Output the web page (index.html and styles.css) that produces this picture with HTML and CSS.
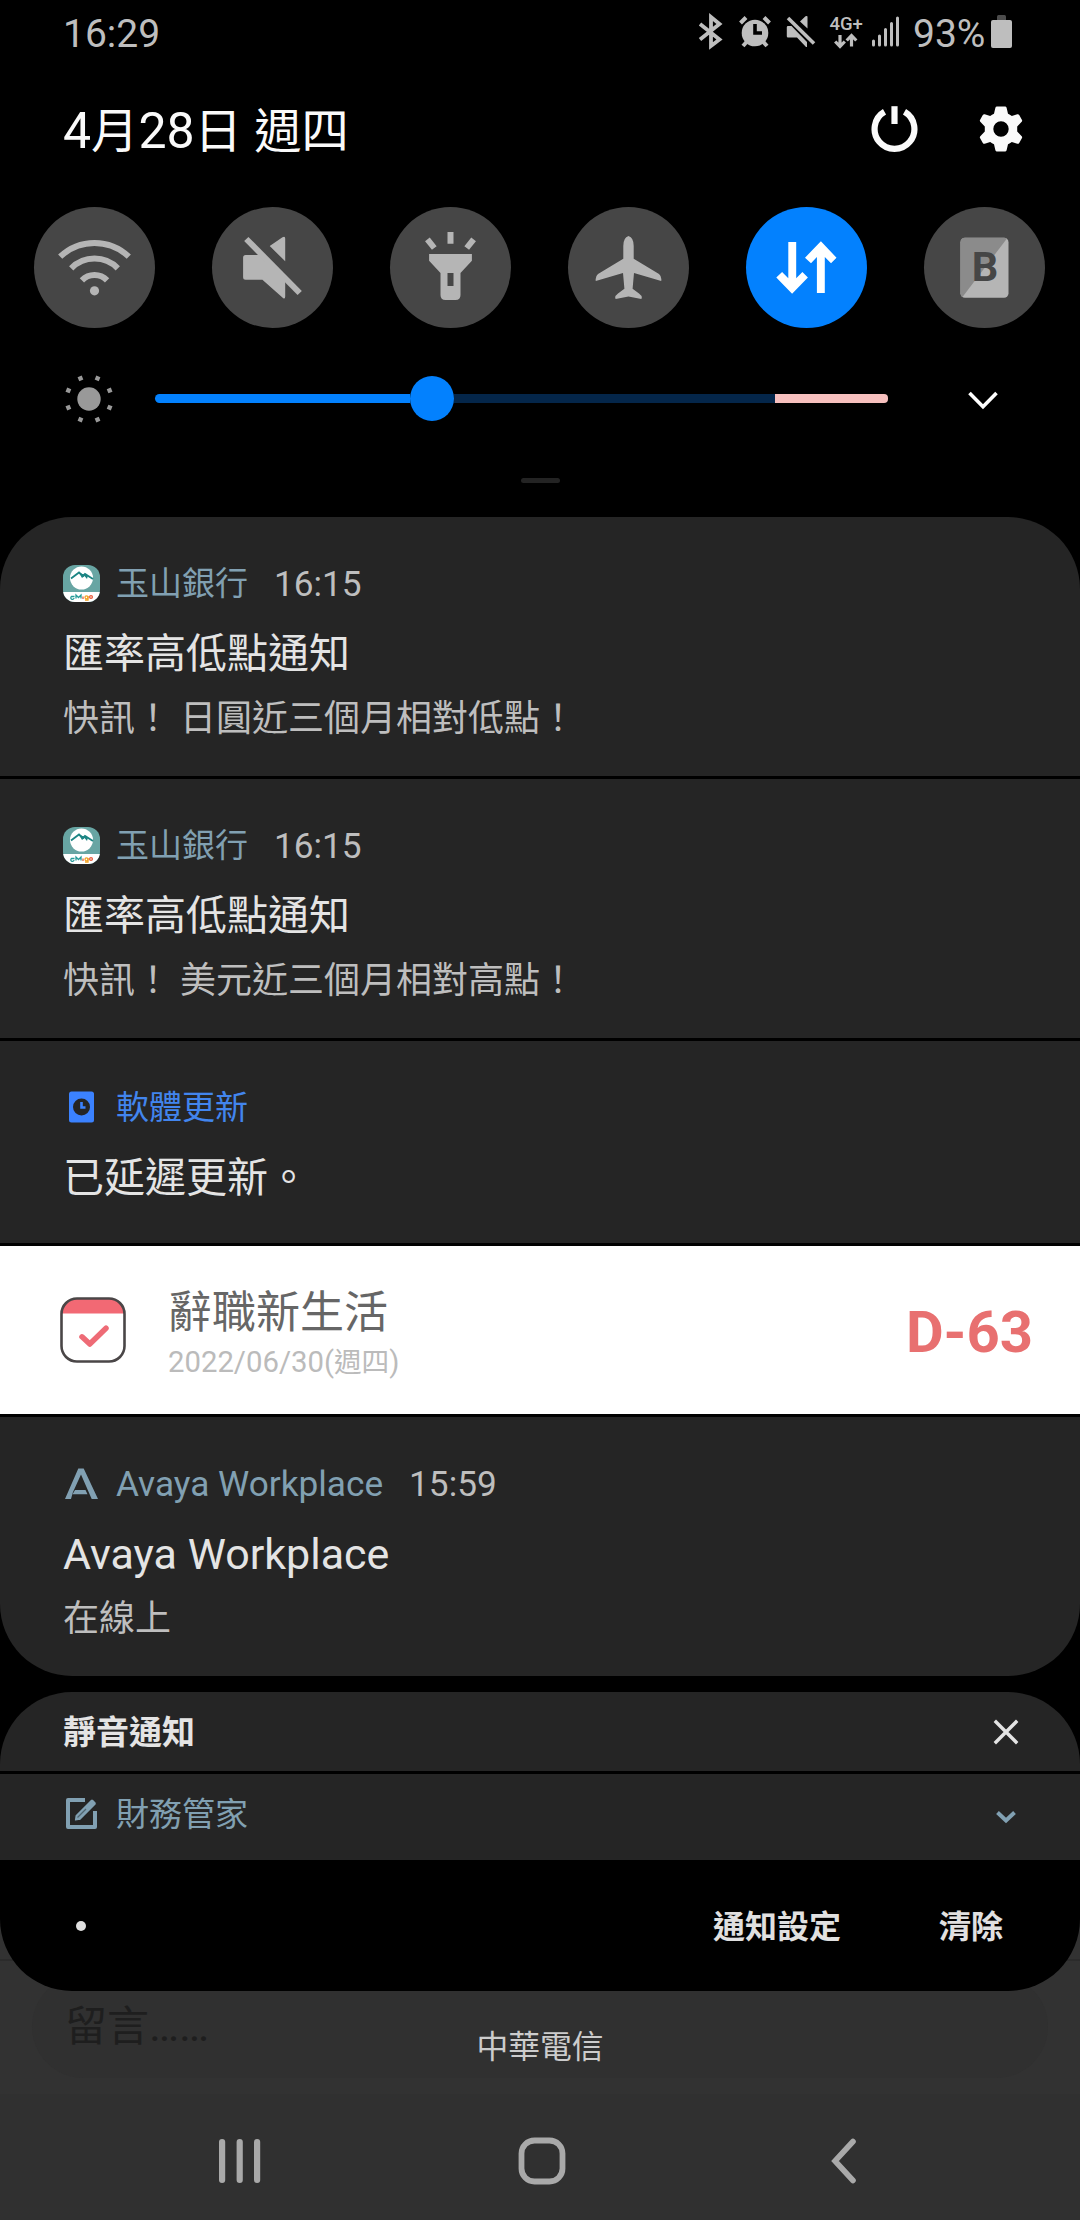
FILE: index.html
```html
<!DOCTYPE html>
<html lang="zh-Hant">
<head>
<meta charset="utf-8">
<title>通知</title>
<link rel="stylesheet" href="styles.css">
</head>
<body>
<div class="screen">
  <div class="app">
    <div class="composer"><div class="composer-field">留言<span class="dots">……</span></div></div>
    <div class="app-nav"></div>
  </div>

  <main class="shade">
    <header class="statusbar">
      <span class="clock">16:29</span>
      <svg class="status-icons" width="232" height="40" viewBox="680 10 232 40" fill="#bebebe">
        <path d="M700 24 719.500 39.500 711 46V17L719.500 24 700 39.500" fill="none" stroke="#bebebe" stroke-width="3.800"/>
        <g>
          <circle cx="755" cy="33" r="13.300"/>
          <path d="M740.500 23 746 17.500M769.500 23 764 17.500" stroke="#bebebe" stroke-width="4"/>
          <path d="M747 41.500 743 46M763 41.500 767 46" stroke="#bebebe" stroke-width="4"/>
          <path d="M755 24V33H762" fill="none" stroke="#000" stroke-width="3.600"/>
        </g>
        <path d="M788 26h3.500L807 42v5h-1l-9-9.500h-9q-1.200 0-1.200-1.200V27.200q0-1.200 1.200-1.200zM800 21.500 805.500 16.300q2-1 2 .5V28.500z"/>
        <path d="M788 18 814 43.500" stroke="#bebebe" stroke-width="3.600"/>
        <text class="net-label" x="829.500" y="29.800">4G+</text>
        <path d="M840 35V45.500M835.200 41.500 840 46.500 844.800 41.500M851.500 46.500V36M846.700 40.500 851.500 35.500 856.300 40.500" fill="none" stroke="#bebebe" stroke-width="3.200"/>
        <path d="M873.500 41V45M879.500 36V45M885.500 29.500V45M891.500 23.500V45M897.500 18V45" stroke="#bebebe" stroke-width="3" stroke-linecap="round"/>
      </svg>
      <span class="battery-level">93%</span>
      <svg class="battery" width="21" height="33" viewBox="0 0 21 33"><path d="M6 5V1.500Q6 0 7.500 0h6Q15 0 15 1.500V5z" fill="#4c4c4c"/><rect y="5" width="21" height="28" rx="2" fill="#bebebe"/></svg>
    </header>

    <div class="daterow">
      <span class="date">4<span class="han">月</span>28<span class="han">日</span> <span class="han">週四</span></span>
      <svg width="48" height="50" viewBox="870 103 48 50" fill="none" stroke="#fafafa" stroke-width="6.200"><path d="M884.500 110.800A19.900 19.900 0 1 0 904.500 110.800"/><path d="M894.500 105.200V123"/></svg>
      <svg class="gear" width="48" height="50" viewBox="-24 -25 48 50" fill="#fafafa"><path fill-rule="evenodd" d="M-4-22.500H4Q5.300-22.500 5.600-21.200L7-15.200Q9-14.200 10.800-13L16.300-14.800Q17.500-15.100 18.200-14L21-9Q21.500-8 20.700-7.200L16.200-2.500V2.500L20.700 7.200Q21.500 8 21 9L18.200 14Q17.500 15.100 16.300 14.800L10.800 13Q9 14.200 7 15.200L5.600 21.200Q5.300 22.500 4 22.500H-4Q-5.300 22.500-5.600 21.200L-7 15.200Q-9 14.200-10.800 13L-16.300 14.800Q-17.500 15.100-18.200 14L-21 9Q-21.500 8-20.700 7.200L-16.200 2.500V-2.500L-20.700-7.200Q-21.500-8-21-9L-18.200-14Q-17.500-15.100-16.300-14.800L-10.800-13Q-9-14.200-7-15.200L-5.600-21.200Q-5.300-22.500-4-22.500zM0-7.700A7.700 7.700 0 1 0 0 7.700 7.700 7.700 0 1 0 0-7.700z"/></svg>
    </div>

    <nav class="toggles">
      <svg class="toggle" viewBox="0 0 121 121"><g fill="none" stroke="#b5b5b5" stroke-width="6"><path d="M26.200 49.700A49.600 49.600 0 0 1 94.800 49.700"/><path d="M37.200 61.300A32.600 32.600 0 0 1 83.800 61.300"/><path d="M47.900 73.300A17.500 17.500 0 0 1 73.100 73.300"/></g><circle cx="60.500" cy="83.800" r="4.600" fill="#b5b5b5"/></svg>
      <svg class="toggle" viewBox="0 0 121 121" fill="#b5b5b5"><path d="M33.600 48H46L50 48 73.200 72V89.500Q73.200 92.500 71 91L50.400 72.700H33.600Q31.100 72.700 31.100 70.200V50.500Q31.100 48 33.600 48zM57.700 39 70.500 30.300Q73.200 29 73.200 31.500V54.300z"/><path d="M34.300 32 87.700 86" stroke="#b5b5b5" stroke-width="6"/></svg>
      <svg class="toggle" viewBox="0 0 121 121" fill="#b5b5b5"><path d="M60.500 25V36.700M37.400 32.300 44.300 41M83.600 32.300 76.700 41" stroke="#b5b5b5" stroke-width="6"/><path fill-rule="evenodd" d="M39.100 47H81.900V53.700L70.500 66V88Q70.500 93 65.500 93H55.500Q50.500 93 50.500 88V66L39.100 53.700zM57.500 66V79H63.500V66z"/></svg>
      <svg class="toggle" viewBox="0 0 121 121" fill="#b5b5b5"><path d="M60.500 29Q65.700 30.500 65.700 39V51.700L91 67Q94 69.500 93.200 74L66 66 64.600 81.700 71 86.500Q75 89.500 73.300 92L60.500 89.500 47.700 92Q46 89.500 50 86.500L56.400 81.700 55 66 27.800 74Q27 69.500 30 67L55.300 51.700V39Q55.300 30.500 60.500 29z"/></svg>
      <svg class="toggle on" viewBox="0 0 121 121" fill="#fff"><path d="M42.300 35H50.200V71.300L56.400 65 61.900 70.500 46.100 86.700 30.300 70.500 36.100 65 42.300 71.300zM70.900 86H78.800V50L85 56.300 90.500 50.700 74.900 34.300 59 50.700 65 56.300 70.900 50z"/></svg>
      <svg class="toggle" viewBox="0 0 121 121"><rect x="36.500" y="30.700" width="48" height="60" rx="4.500" fill="#b5b5b5"/><path d="M82.800 31.700 38.500 90Q36.500 89 36.500 86.200V35.200Q36.500 30.700 41 30.700H80Q81.800 30.700 82.800 31.700z" fill="#8b8b8b"/><text class="toggle-letter" x="60.900" y="74">B</text></svg>
    </nav>

    <div class="brightness">
      <svg class="sun" width="50" height="50" viewBox="-25 -25 50 50" fill="#999"><circle r="11.700"/><g id="rays"><path d="M-2.200-24.500h4.400v4.400h-4.400z" transform="rotate(22.500)"/><path d="M-2.200-24.500h4.400v4.400h-4.400z" transform="rotate(67.500)"/><path d="M-2.200-24.500h4.400v4.400h-4.400z" transform="rotate(112.500)"/><path d="M-2.200-24.500h4.400v4.400h-4.400z" transform="rotate(157.500)"/></g><use href="#rays" transform="rotate(180)"/></svg>
      <div class="slider"><span class="filled"></span><span class="thumb"></span><span class="rest"></span><span class="hot"></span></div>
      <svg class="more" width="34" height="24" viewBox="0 0 34 24" fill="none" stroke="#fff" stroke-width="3.600"><path d="M3.500 4 17 17.700 30.500 4"/></svg>
    </div>
    <div class="handle"></div>

    <section class="list">
      <article class="note">
        <div class="note-head">
          <svg class="note-icon" viewBox="0 0 37 37"><defs><clipPath id="bank"><rect width="37" height="37" rx="12"/></clipPath></defs><g clip-path="url(#bank)"><path fill="#68a5a3" d="M0 0h37v37H0z"/><circle cx="18.500" cy="13" r="11.500" fill="#fff"/><path d="M0 27h37v10H0z" fill="#fff"/><path d="M8 13.500 16 7.500 20 11 22 9 30 14" fill="none" stroke="#1d8584" stroke-width="1.800"/><path d="M16 8 19 13 21.500 11 24 14 25 10.500z" fill="#1d8584"/></g><g fill="none" stroke-width="1.300"><path d="M11.500 31.500H8.500A1.600 1.600 0 1 0 11 33M13 33.500V30L15.500 32.500 18 30V33.500" stroke="#249b98"/><path d="M20 31.500V34" stroke="#e95b3b"/><circle cx="23.500" cy="32.300" r="1.500" stroke="#f3a322"/><path d="M25 31V35H22" stroke="#f3a322"/><circle cx="28" cy="32" r="1.400" stroke="#e95b3b"/></g></svg>
          <span class="source">玉山銀行</span><time>16:15</time>
        </div>
        <h2>匯率高低點通知</h2>
        <p>快訊！ 日圓近三個月相對低點！</p>
      </article>
      <article class="note">
        <div class="note-head">
          <svg class="note-icon" viewBox="0 0 37 37"><g clip-path="url(#bank)"><path fill="#68a5a3" d="M0 0h37v37H0z"/><circle cx="18.500" cy="13" r="11.500" fill="#fff"/><path d="M0 27h37v10H0z" fill="#fff"/><path d="M8 13.500 16 7.500 20 11 22 9 30 14" fill="none" stroke="#1d8584" stroke-width="1.800"/><path d="M16 8 19 13 21.500 11 24 14 25 10.500z" fill="#1d8584"/></g><g fill="none" stroke-width="1.300"><path d="M11.500 31.500H8.500A1.600 1.600 0 1 0 11 33M13 33.500V30L15.500 32.500 18 30V33.500" stroke="#249b98"/><path d="M20 31.500V34" stroke="#e95b3b"/><circle cx="23.500" cy="32.300" r="1.500" stroke="#f3a322"/><path d="M25 31V35H22" stroke="#f3a322"/><circle cx="28" cy="32" r="1.400" stroke="#e95b3b"/></g></svg>
          <span class="source">玉山銀行</span><time>16:15</time>
        </div>
        <h2>匯率高低點通知</h2>
        <p>快訊！ 美元近三個月相對高點！</p>
      </article>
      <article class="note note-short">
        <div class="note-head">
          <svg class="note-icon" viewBox="0 0 37 37"><rect x="6" y="2.500" width="25" height="31" rx="2.500" fill="#3b82ff"/><circle cx="18.500" cy="18" r="8.500" fill="#252525"/><path d="M18.500 13V18.500H22.500" fill="none" stroke="#3b82ff" stroke-width="2.600"/></svg>
          <span class="source system">軟體更新</span>
        </div>
        <h2>已延遲更新。</h2>
      </article>
      <article class="countdown">
        <svg width="66" height="66" viewBox="0 0 66 66"><path d="M1.500 16.500V17Q1.500 1.500 17 1.500H49Q64.500 1.500 64.500 17V16.500z" fill="#f26974"/><rect x="1.500" y="1.500" width="63" height="63" rx="15.500" fill="none" stroke="#4a4647" stroke-width="2.600"/><path d="M22 39.800 29.800 47 46 31.200" fill="none" stroke="#ee6b76" stroke-width="5.500" stroke-linecap="round" stroke-linejoin="round"/></svg>
        <div class="countdown-text"><h3>辭職新生活</h3><div class="due">2022/06/30(<span class="han">週四</span>)</div></div>
        <strong>D-63</strong>
      </article>
      <article class="note">
        <div class="note-head">
          <svg class="note-icon" viewBox="0 0 37 37" fill="#81a0b2"><path d="M2 34 15.300 3.500H20.700L35 34H28.700L18 9.500 9.800 27.500 8 34zM12 25H22.500L24.500 29.300H9.500z"/></svg>
          <span class="source latin">Avaya Workplace</span><time>15:59</time>
        </div>
        <h2 class="latin">Avaya Workplace</h2>
        <p>在線上</p>
      </article>
    </section>

    <section class="silent">
      <div class="silent-head"><b>靜音通知</b><svg width="28" height="28" viewBox="0 0 28 28" stroke="#e4e4e4" stroke-width="3.400"><path d="M2.800 2.800 25.200 25.200M25.200 2.800 2.800 25.200"/></svg></div>
      <div class="silent-item">
        <svg class="note-icon" viewBox="0 0 37 37"><path d="M22 5H5V32H32V16" fill="none" stroke="#81a0b2" stroke-width="4" stroke-linejoin="round"/><path d="M12 20 27.500 4.500Q29 3 30.500 4.500L33 7Q34 8.500 33 10L17.500 25.500 11 26.500z" fill="#81a0b2" stroke="#252525" stroke-width="1.300"/><path d="M14.500 22.500 23 14" stroke="#4f646f" stroke-width="1.200"/></svg>
        <span class="source">財務管家</span>
        <svg class="expand" width="22" height="14" viewBox="0 0 22 14" fill="none" stroke="#81a0b2" stroke-width="4"><path d="M2.500 2.500 11 10.500 19.500 2.500"/></svg>
      </div>
    </section>

    <footer class="actions"><i class="dot"></i><span class="settings">通知設定</span><span class="clear">清除</span></footer>
  </main>

  <div class="carrier">中華電信</div>
  <nav class="navbar">
    <svg width="42" height="44" viewBox="0 0 42 44" fill="#a9a9a9"><rect width="6.200" height="44" rx="3"/><rect x="17.600" width="6.200" height="44" rx="3"/><rect x="35" width="6.200" height="44" rx="3"/></svg>
    <svg class="home" width="48" height="48" viewBox="0 0 48 48"><rect x="3.500" y="3.500" width="41" height="41" rx="13" fill="none" stroke="#a9a9a9" stroke-width="5.800"/></svg>
    <svg width="30" height="48" viewBox="0 0 30 48" fill="none" stroke="#a9a9a9" stroke-width="5.600" stroke-linecap="round"><path d="M25 4.500 7 24 25 43.500"/></svg>
  </nav>
</div>
</body>
</html>
```
FILE: styles.css
```css
* { box-sizing: border-box; margin: 0; padding: 0; }
body {
  width: 1080px;
  height: 2220px;
  overflow: hidden;
  background: #323232;
  font-family: Roboto, "Noto Sans CJK TC", sans-serif;
}
svg { display: block; flex: none; }
.han { font-size: 0.945em; }
.screen {
  position: relative;
  height: 2220px;
  display: flex;
  flex-direction: column;
}

/* dimmed app behind the shade */
.app {
  position: absolute;
  inset: 0;
  display: flex;
  flex-direction: column;
  justify-content: flex-end;
}
.composer {
  height: 135px;
  padding: 14px 32px 16px;
  border-top: 2px solid #2b2b2b;
}
.composer-field {
  height: 103px;
  border-radius: 52px;
  padding-left: 33px;
  background: #303030;
  color: #1e1e1e;
  font-size: 42px;
  line-height: 101px;
}
.dots { font-size: 45px; }
.app-nav { height: 126px; background: #303030; }

.shade {
  position: relative;
  flex: none;
  height: 1991px;
  display: flex;
  flex-direction: column;
  background: #000;
  border-radius: 0 0 72px 72px;
  overflow: hidden;
}
.shade > * { flex: none; }

.statusbar {
  height: 66px;
  padding: 0 68px 0 63px;
  display: flex;
  align-items: center;
  color: #bebebe;
  font-size: 39px;
  line-height: 64px;
}
.clock { margin-right: auto; padding-top: 2px; }
.status-icons { margin-bottom: 6px; }
.net-label {
  font: 500 18.500px Roboto, sans-serif;
}
.battery-level { width: 79px; padding: 2px 0 0 1px; }
.battery { margin-bottom: 3px; }

.daterow {
  height: 128px;
  padding: 0 55px 2px 63px;
  display: flex;
  align-items: center;
  color: #fafafa;
}
.date {
  margin-right: auto;
  padding-top: 4px;
  font-size: 50px;
  line-height: 70px;
}
.gear { margin-left: 59px; }

.toggles {
  margin-top: 13px;
  padding: 0 35px 0 34px;
  display: flex;
  justify-content: space-between;
}
.toggle {
  width: 121px;
  height: 121px;
  border-radius: 50%;
  background: #464646;
}
.toggle.on { background: #0381fe; }
.toggle-letter {
  font: 700 41.500px Roboto, sans-serif;
  fill: #464646;
  text-anchor: middle;
}

.brightness {
  margin-top: 43px;
  height: 54px;
  padding: 0 80px 0 64px;
  display: flex;
  align-items: center;
}
.sun { margin-top: 2px; }
.slider {
  width: 733px;
  margin-left: 41px;
  display: flex;
  align-items: center;
}
.slider span { height: 9px; }
.slider .filled { width: 255px; border-radius: 5px 0 0 5px; background: #0381fe; }
.slider .thumb { width: 44px; height: 45px; border-radius: 50%; background: #0381fe; }
.slider .rest { flex: 1; background: #04264a; }
.slider .hot { width: 113px; border-radius: 0 4px 4px 0; background: #f7c0be; }
.more { margin: 6px 0 0 auto; }
.handle {
  width: 39px;
  height: 5px;
  margin: 53px auto 34px;
  border-radius: 3px;
  background: #232323;
}

.list {
  display: flex;
  flex-direction: column;
  gap: 3px;
  border-radius: 72px;
  overflow: hidden;
}
.note {
  height: 259px;
  padding: 41px 63px 0;
  background: #252525;
}
.note-short { height: 202px; }
.note-head { height: 50px; display: flex; align-items: center; }
.note-icon { width: 37px; height: 37px; }
.source {
  margin-left: 16px;
  padding-top: 2px;
  color: #81a0b2;
  font-size: 33px;
  line-height: 48px;
}
.source.latin { font-size: 35.200px; }
.system { color: #4285ee; }
time {
  margin-left: 26px;
  padding-top: 2px;
  color: #bebebe;
  font-size: 35.200px;
  line-height: 48px;
}
h2 {
  margin-top: 18px;
  color: #e4e4e4;
  font-size: 41px;
  font-weight: 400;
  line-height: 56px;
}
h2.latin { font-size: 43px; }
.note p {
  margin-top: 12px;
  color: #bebebe;
  font-size: 36px;
  line-height: 50px;
  white-space: nowrap;
}

.countdown {
  height: 168px;
  padding: 0 47px 0 60px;
  display: flex;
  align-items: center;
  background: #fff;
}
.countdown-text { margin: 0 auto 0 42px; padding-top: 8px; }
.countdown h3 {
  color: #666;
  font-size: 44px;
  font-weight: 400;
  line-height: 56px;
}
.due {
  color: #bbb;
  font-size: 29.300px;
  line-height: 42px;
}
.countdown strong {
  padding-top: 4px;
  color: #e87070;
  font-size: 58px;
  font-weight: 700;
}

.silent {
  margin-top: 16px;
  height: 168px;
  border-radius: 72px 72px 0 0;
  overflow: hidden;
}
.silent-head, .silent-item {
  padding: 0 60px 0 63px;
  display: flex;
  align-items: center;
  background: #252525;
}
.silent-head {
  height: 79px;
  margin-bottom: 3px;
  justify-content: space-between;
  color: #e4e4e4;
  font-size: 33px;
}
.silent-head b { padding-bottom: 3px; font-weight: 700; }
.silent-item { height: 86px; padding-bottom: 8px; }
.silent-item .source { padding-top: 4px; }
.expand { margin: 8px 3px 0 auto; }

.actions {
  height: 131px;
  padding: 0 77px 0 76px;
  display: flex;
  align-items: center;
  color: #e0e0e0;
  font-size: 32px;
  font-weight: 700;
}
.dot { width: 10px; height: 10px; border-radius: 50%; background: #e0e0e0; }
.settings, .clear { padding-bottom: 3px; }
.settings { margin: 0 98px 0 auto; }

.carrier {
  position: relative;
  height: 103px;
  padding-top: 33px;
  text-align: center;
  color: #ccc;
  font-size: 31.800px;
  line-height: 46px;
}
.navbar {
  position: relative;
  height: 126px;
  padding: 7px 222px 0 219px;
  display: flex;
  align-items: center;
  justify-content: space-between;
}
.home { margin-right: 6px; }
```
